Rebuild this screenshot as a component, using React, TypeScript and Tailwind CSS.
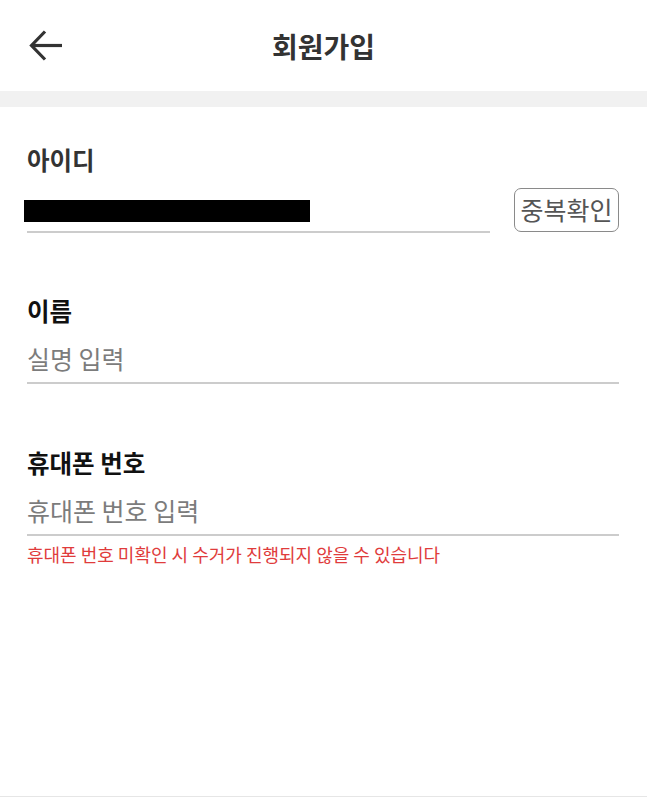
import React from 'react';

const font = { fontFamily: '"Noto Sans CJK KR", "Noto Sans", sans-serif' };

function BackArrow() {
  return (
    <svg width="36" height="36" viewBox="0 0 36 36" fill="none" stroke="#333" strokeWidth="3.2">
      <path d="M4 17.5h30" />
      <path d="M17 3.5L3.5 17.5L17 31.5" />
    </svg>
  );
}

function Field({ label, placeholder, className }: { label: string; placeholder: string; className?: string }) {
  return (
    <div className={className}>
      <div className="text-[24.5px] leading-[32px] font-bold text-[#111]">{label}</div>
      <div className="mt-[9px] h-[48px] border-b-2 border-[#cccccc] flex items-center">
        <span className="text-[25px] text-[#7c7c7c]">{placeholder}</span>
      </div>
    </div>
  );
}

export default function App() {
  return (
    <div className="w-[647px] h-[797px] bg-white border-b border-[#e6e6e6] flex flex-col" style={font}>
      {/* 헤더 */}
      <header className="h-[91px] grid grid-cols-[90px_1fr_90px] items-center">
        <div className="pl-[28px] pt-[1px]">
          <BackArrow />
        </div>
        <h1 className="text-center text-[28px] font-bold text-[#333]">회원가입</h1>
        <div />
      </header>
      <div className="h-[16px] bg-[#f1f1f1]" />

      <main className="px-[27px] pr-[28px] pt-[37px]">
        {/* 아이디 */}
        <div>
          <div className="text-[24.5px] leading-[32px] font-bold text-[#333]">아이디</div>
          <div className="mt-[11px] flex items-end gap-[24px]">
            <div className="flex-1 h-[46px] border-b-2 border-[#cccccc] flex items-end pb-[9px]">
              <div className="-ml-[3px] w-[286px] h-[22px] bg-black" />
            </div>
            <button className="w-[105px] h-[44px] mb-[1px] border-[1.5px] border-[#8a8a8a] rounded-[7px] text-[25px] text-[#555] flex items-center justify-center">
              중복확인
            </button>
          </div>
        </div>

        <Field label="이름" placeholder="실명 입력" className="mt-[62px]" />

        <div className="mt-[63px]">
          <Field label="휴대폰 번호" placeholder="휴대폰 번호 입력" />
          <p className="mt-[6px] text-[18px] leading-[24px] text-[#e03c3c]">
            휴대폰 번호 미확인 시 수거가 진행되지 않을 수 있습니다
          </p>
        </div>
      </main>
    </div>
  );
}
